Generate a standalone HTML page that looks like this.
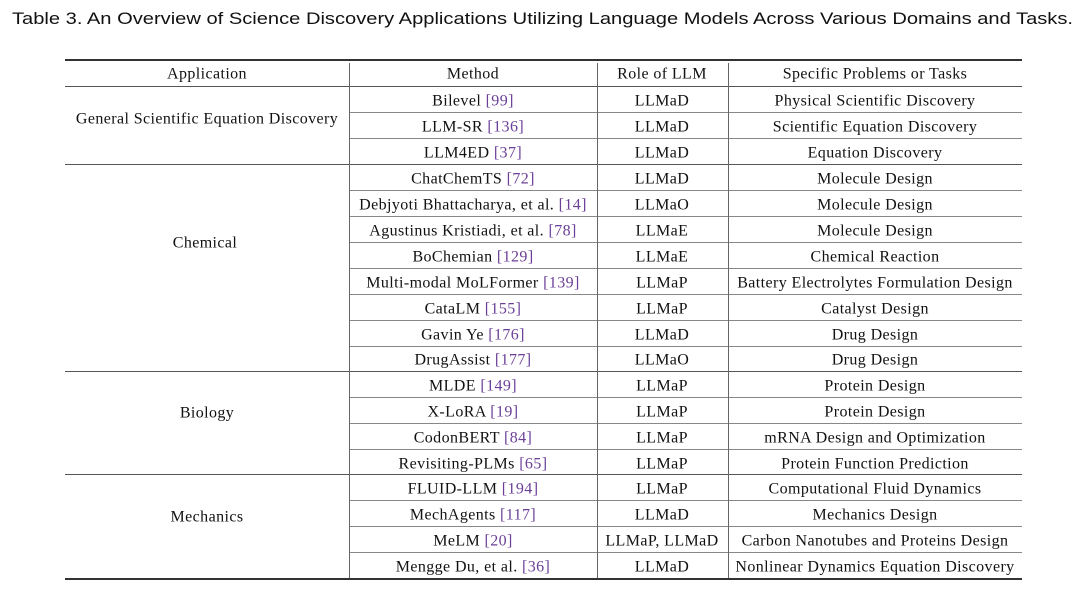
<!DOCTYPE html>
<html><head><meta charset="utf-8"><style>
body{margin:0;width:1080px;height:589px;background:#fff;position:relative;overflow:hidden;font-family:"Liberation Serif",serif;color:#111}
.t{position:absolute;white-space:nowrap;font-size:16px;letter-spacing:0.4px;transform:translate(-50%,1.5px);line-height:26px;height:26px}
.c{color:#6b3f98}
.h{position:absolute;background:#555}
.v{position:absolute;width:1px;background:#666}
</style></head><body>
<svg style="position:absolute;left:0;top:0" width="1080" height="40"><text x="12" y="24" font-family="Liberation Sans, sans-serif" font-size="17" fill="#111" textLength="1061" lengthAdjust="spacingAndGlyphs">Table 3.  An Overview of Science Discovery Applications Utilizing Language Models Across Various Domains and Tasks.</text></svg>

<div class="h" style="left:65px;width:957px;top:59px;height:2px;background:#333"></div>
<div class="h" style="left:65px;width:957px;top:86px;height:1px"></div>
<div class="h" style="left:65px;width:957px;top:164px;height:1px"></div>
<div class="h" style="left:65px;width:957px;top:371px;height:1px"></div>
<div class="h" style="left:65px;width:957px;top:474px;height:1px"></div>
<div class="h" style="left:65px;width:957px;top:578px;height:2px;background:#333"></div>

<div class="h" style="left:349px;width:673px;top:112px;height:1px;background:#888"></div>
<div class="h" style="left:349px;width:673px;top:138px;height:1px;background:#888"></div>
<div class="h" style="left:349px;width:673px;top:190px;height:1px;background:#888"></div>
<div class="h" style="left:349px;width:673px;top:216px;height:1px;background:#888"></div>
<div class="h" style="left:349px;width:673px;top:242px;height:1px;background:#888"></div>
<div class="h" style="left:349px;width:673px;top:268px;height:1px;background:#888"></div>
<div class="h" style="left:349px;width:673px;top:294px;height:1px;background:#888"></div>
<div class="h" style="left:349px;width:673px;top:320px;height:1px;background:#888"></div>
<div class="h" style="left:349px;width:673px;top:346px;height:1px;background:#888"></div>
<div class="h" style="left:349px;width:673px;top:397px;height:1px;background:#888"></div>
<div class="h" style="left:349px;width:673px;top:423px;height:1px;background:#888"></div>
<div class="h" style="left:349px;width:673px;top:449px;height:1px;background:#888"></div>
<div class="h" style="left:349px;width:673px;top:500px;height:1px;background:#888"></div>
<div class="h" style="left:349px;width:673px;top:526px;height:1px;background:#888"></div>
<div class="h" style="left:349px;width:673px;top:552px;height:1px;background:#888"></div>

<div class="v" style="left:349px;top:63px;height:515px"></div>
<div class="v" style="left:597px;top:63px;height:515px"></div>
<div class="v" style="left:728px;top:63px;height:515px"></div>

<div class="t" style="left:207px;top:60px">Application</div>
<div class="t" style="left:473px;top:60px">Method</div>
<div class="t" style="left:662px;top:60px">Role of LLM</div>
<div class="t" style="left:875px;top:60px">Specific Problems or Tasks</div>

<div class="t" style="left:207px;top:105px">General Scientific Equation Discovery</div>
<div class="t" style="left:205px;top:229px">Chemical</div>
<div class="t" style="left:207px;top:399px">Biology</div>
<div class="t" style="left:207px;top:503px">Mechanics</div>

<div class="t" style="left:473px;top:87px">Bilevel <span class="c">[99]</span></div>
<div class="t" style="left:473px;top:113px">LLM-SR <span class="c">[136]</span></div>
<div class="t" style="left:473px;top:139px">LLM4ED <span class="c">[37]</span></div>
<div class="t" style="left:473px;top:165px">ChatChemTS <span class="c">[72]</span></div>
<div class="t" style="left:473px;top:191px">Debjyoti Bhattacharya, et al. <span class="c">[14]</span></div>
<div class="t" style="left:473px;top:217px">Agustinus Kristiadi, et al. <span class="c">[78]</span></div>
<div class="t" style="left:473px;top:243px">BoChemian <span class="c">[129]</span></div>
<div class="t" style="left:473px;top:269px">Multi-modal MoLFormer <span class="c">[139]</span></div>
<div class="t" style="left:473px;top:295px">CataLM <span class="c">[155]</span></div>
<div class="t" style="left:473px;top:321px">Gavin Ye <span class="c">[176]</span></div>
<div class="t" style="left:473px;top:346px">DrugAssist <span class="c">[177]</span></div>
<div class="t" style="left:473px;top:372px">MLDE <span class="c">[149]</span></div>
<div class="t" style="left:473px;top:398px">X-LoRA <span class="c">[19]</span></div>
<div class="t" style="left:473px;top:424px">CodonBERT <span class="c">[84]</span></div>
<div class="t" style="left:473px;top:450px">Revisiting-PLMs <span class="c">[65]</span></div>
<div class="t" style="left:473px;top:475px">FLUID-LLM <span class="c">[194]</span></div>
<div class="t" style="left:473px;top:501px">MechAgents <span class="c">[117]</span></div>
<div class="t" style="left:473px;top:527px">MeLM <span class="c">[20]</span></div>
<div class="t" style="left:473px;top:553px">Mengge Du, et al. <span class="c">[36]</span></div>

<div class="t" style="left:662px;top:87px">LLMaD</div>
<div class="t" style="left:662px;top:113px">LLMaD</div>
<div class="t" style="left:662px;top:139px">LLMaD</div>
<div class="t" style="left:662px;top:165px">LLMaD</div>
<div class="t" style="left:662px;top:191px">LLMaO</div>
<div class="t" style="left:662px;top:217px">LLMaE</div>
<div class="t" style="left:662px;top:243px">LLMaE</div>
<div class="t" style="left:662px;top:269px">LLMaP</div>
<div class="t" style="left:662px;top:295px">LLMaP</div>
<div class="t" style="left:662px;top:321px">LLMaD</div>
<div class="t" style="left:662px;top:346px">LLMaO</div>
<div class="t" style="left:662px;top:372px">LLMaP</div>
<div class="t" style="left:662px;top:398px">LLMaP</div>
<div class="t" style="left:662px;top:424px">LLMaP</div>
<div class="t" style="left:662px;top:450px">LLMaP</div>
<div class="t" style="left:662px;top:475px">LLMaP</div>
<div class="t" style="left:662px;top:501px">LLMaD</div>
<div class="t" style="left:662px;top:527px">LLMaP, LLMaD</div>
<div class="t" style="left:662px;top:553px">LLMaD</div>

<div class="t" style="left:875px;top:87px">Physical Scientific Discovery</div>
<div class="t" style="left:875px;top:113px">Scientific Equation Discovery</div>
<div class="t" style="left:875px;top:139px">Equation Discovery</div>
<div class="t" style="left:875px;top:165px">Molecule Design</div>
<div class="t" style="left:875px;top:191px">Molecule Design</div>
<div class="t" style="left:875px;top:217px">Molecule Design</div>
<div class="t" style="left:875px;top:243px">Chemical Reaction</div>
<div class="t" style="left:875px;top:269px">Battery Electrolytes Formulation Design</div>
<div class="t" style="left:875px;top:295px">Catalyst Design</div>
<div class="t" style="left:875px;top:321px">Drug Design</div>
<div class="t" style="left:875px;top:346px">Drug Design</div>
<div class="t" style="left:875px;top:372px">Protein Design</div>
<div class="t" style="left:875px;top:398px">Protein Design</div>
<div class="t" style="left:875px;top:424px">mRNA Design and Optimization</div>
<div class="t" style="left:875px;top:450px">Protein Function Prediction</div>
<div class="t" style="left:875px;top:475px">Computational Fluid Dynamics</div>
<div class="t" style="left:875px;top:501px">Mechanics Design</div>
<div class="t" style="left:875px;top:527px">Carbon Nanotubes and Proteins Design</div>
<div class="t" style="left:875px;top:553px">Nonlinear Dynamics Equation Discovery</div>
</body></html>
